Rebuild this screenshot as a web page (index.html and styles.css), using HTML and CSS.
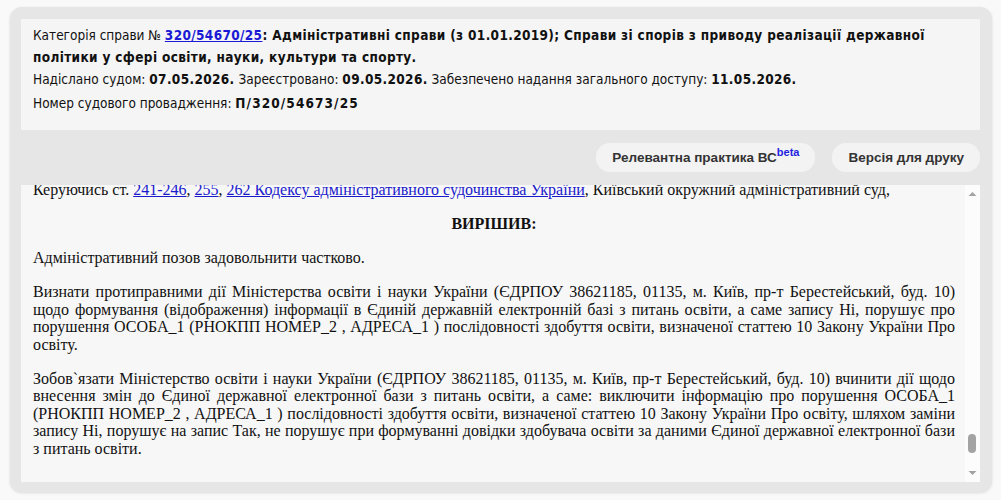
FILE: index.html
```html
<!DOCTYPE html>
<html lang="uk">
<head>
<meta charset="utf-8">
<title>Рішення</title>
<link rel="stylesheet" href="styles.css">
</head>
<body>
<div class="card">
  <div class="info">
    <p class="info-line info-cat">Категорія справи № <a class="case-link" href="#">320/54670/25</a><b>: Адміністративні справи (з 01.01.2019); Справи зі спорів з приводу реалізації державної політики у сфері освіти, науки, культури та спорту.</b></p>
    <p class="info-line">Надіслано судом: <b>07.05.2026.</b> Зареєстровано: <b>09.05.2026.</b> Забезпечено надання загального доступу: <b>11.05.2026.</b></p>
    <p class="info-line info-num">Номер судового провадження: <b class="wide">П/320/54673/25</b></p>
  </div>
  <div class="toolbar">
    <button class="btn">Релевантна практика ВС<sup class="beta">beta</sup></button>
    <button class="btn">Версія для друку</button>
  </div>
  <div class="doc">
    <div class="doc-text">
      <p class="first">Керуючись ст. <a href="#">241-246</a>, <a href="#">255</a>, <a href="#">262 Кодексу адміністративного судочинства України</a>, Київський окружний адміністративний суд,</p>
      <p class="center"><b>ВИРІШИВ:</b></p>
      <p>Адміністративний позов задовольнити частково.</p>
      <p>Визнати протиправними дії Міністерства освіти і науки України (ЄДРПОУ 38621185, 01135, м. Київ, пр-т Берестейський, буд. 10) щодо формування (відображення) інформації в Єдиній державній електронній базі з питань освіти, а саме запису Ні, порушує про порушення ОСОБА_1 (РНОКПП НОМЕР_2 , АДРЕСА_1 ) послідовності здобуття освіти, визначеної статтею 10 Закону України Про освіту.</p>
      <p>Зобов`язати Міністерство освіти і науки України (ЄДРПОУ 38621185, 01135, м. Київ, пр-т Берестейський, буд. 10) вчинити дії щодо внесення змін до Єдиної державної електронної бази з питань освіти, а саме: виключити інформацію про порушення ОСОБА_1 (РНОКПП НОМЕР_2 , АДРЕСА_1 ) послідовності здобуття освіти, визначеної статтею 10 Закону України Про освіту, шляхом заміни запису Ні, порушує на запис Так, не порушує при формуванні довідки здобувача освіти за даними Єдиної державної електронної бази з питань освіти.</p>
    </div>
    <div class="scrollbar">
      <svg class="arrow" width="15" height="17" viewBox="0 0 15 17"><path d="M3.5 11 L7.5 7 L11.5 11 Z" fill="#a3a3a3"/></svg>
      <div class="track">
        <div class="thumb"></div>
      </div>
      <svg class="arrow" width="15" height="17" viewBox="0 0 15 17"><path d="M3.5 6 L7.5 10 L11.5 6 Z" fill="#a3a3a3"/></svg>
    </div>
  </div>
</div>
</body>
</html>
```

FILE: styles.css
```css
html, body {
  margin: 0;
  padding: 0;
}
body {
  background: #f9f9f9;
  width: 1001px;
  height: 500px;
  overflow: hidden;
}
.card {
  margin: 7px 9px 8px 10px;
  height: 485px;
  box-sizing: border-box;
  background: #e6e6e6;
  border-radius: 12px;
  box-shadow: 0 1px 3px rgba(0, 0, 0, 0.12);
  padding: 12px 12px 10px 11px;
  display: flex;
  flex-direction: column;
}
.info {
  background: #f5f5f5;
  padding: 5px 12px 16px 12px;
  font-family: "DejaVu Sans Condensed", "DejaVu Sans", sans-serif;
  font-size: 13.5px;
  color: #111;
}
.info-line {
  margin: 0;
  line-height: 22px;
}
.info-num {
  margin-top: 2px;
}
.info b {
  font-weight: bold;
  letter-spacing: 0.35px;
}
.info b.wide {
  letter-spacing: 1.1px;
}
.case-link {
  color: #1a1ad6;
  font-weight: bold;
  letter-spacing: 0.35px;
}
.toolbar {
  height: 55px;
  display: flex;
  justify-content: flex-end;
  align-items: center;
  gap: 17px;
}
.btn {
  font-family: "Liberation Sans", Arial, sans-serif;
  font-weight: bold;
  font-size: 13.5px;
  color: #333;
  background: #f3f3f3;
  border: none;
  border-radius: 14px;
  height: 29px;
  padding: 0 16px;
  line-height: 29px;
}
.beta {
  color: #2222e0;
  font-size: 11px;
  vertical-align: 6px;
  line-height: 0;
}
.doc {
  flex: 1;
  display: flex;
  background: #f7f7f7;
  overflow: hidden;
}
.doc-text {
  flex: 1;
  padding: 0 10px 0 12px;
  font-family: "Liberation Serif", "Times New Roman", serif;
  font-size: 16px;
  line-height: 17.5px;
  color: #111;
  text-align: justify;
  overflow: hidden;
}
.doc-text p {
  margin: 0 0 16.5px 0;
}
.doc-text p.first {
  margin-top: -4px;
  text-align: left;
}
.doc-text p.center {
  text-align: center;
}
.doc-text a {
  color: #1a1acc;
}
.scrollbar {
  width: 15px;
  background: #fcfcfc;
  display: flex;
  flex-direction: column;
}
.arrow {
  display: block;
  flex: none;
}
.track {
  flex: 1;
  position: relative;
}
.thumb {
  position: absolute;
  left: 3px;
  width: 8px;
  bottom: 12px;
  height: 19px;
  border-radius: 4px;
  background: #a3a3a3;
}
```
